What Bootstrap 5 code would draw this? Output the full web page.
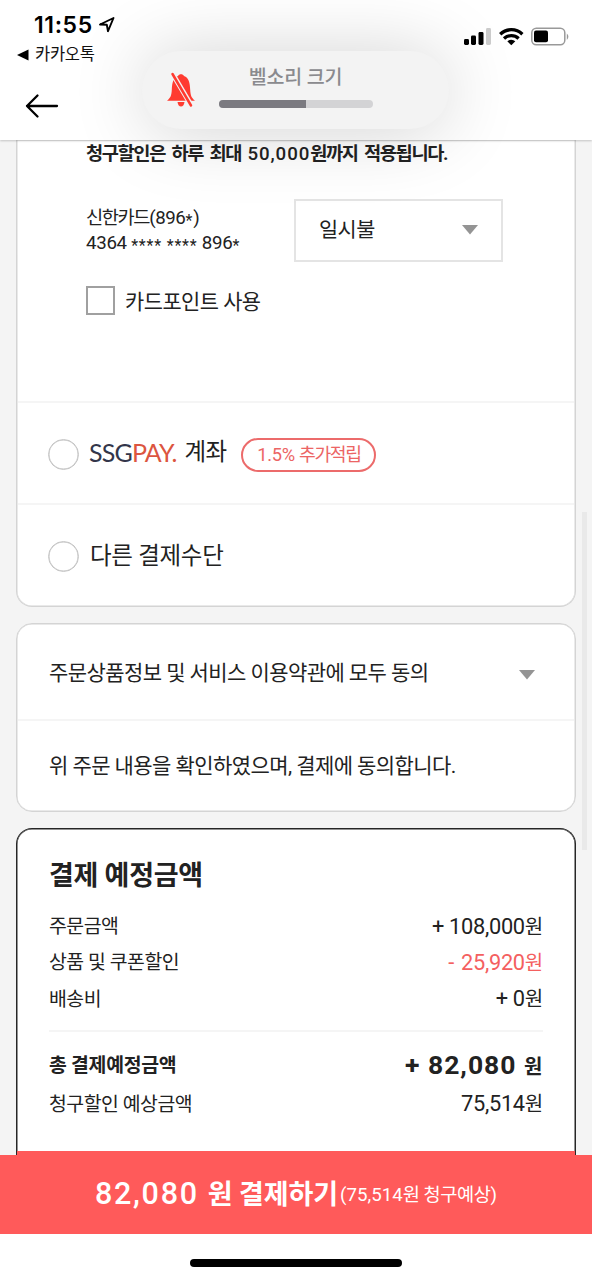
<!DOCTYPE html>
<html lang="ko">
<head>
<meta charset="utf-8">
<meta name="viewport" content="width=device-width, initial-scale=1">
<title>결제하기</title>
<link href="https://cdn.jsdelivr.net/npm/bootstrap@5.3.0/dist/css/bootstrap.min.css" rel="stylesheet">
<style>
  html, body { height: 1280px; overflow: hidden; }
  body { font-family: Roboto, "Noto Sans CJK KR", sans-serif; line-height: 1; color: #222; background: #f4f4f4; white-space: nowrap; font-size: 20px; }
  .ko { letter-spacing: -.025em; }
  .snug { letter-spacing: -.075em; }
  .appbar { height: 140px; box-shadow: 0 1px 2px rgba(0,0,0,.2); z-index: 2; }
  .clock { font: 600 23px/1 Inter, sans-serif; letter-spacing: .6px; color: #000; }
  .back-app { font-size: 16.5px; letter-spacing: -.3px; color: #111; }
  .hud { left: 142px; top: 51px; width: 307px; height: 78px; border-radius: 39px; background: #f3f3f3; box-shadow: 0 2px 75px rgba(0,0,0,.18); z-index: 3; }
  .hud-title { font-size: 19.5px; font-weight: 500; color: #8a8a8e; letter-spacing: -.2px; }
  .hud-track { width: 154px; height: 8px; background: #d3d3d5; border-radius: 4px; }
  .hud-track .progress-bar { background: #7b7a80; }
  .sheet { margin: 0 16px; padding: 1px; background: #fff; border: 1px solid #d4d4d4; box-shadow: inset 0 0 0 .5px #d4d4d4; border-radius: 16px; }
  .pay { height: 467px; border-top: 0; padding-top: 0; border-radius: 0 0 16px 16px; }
  .rule { border-top: 2px solid #f5f5f5; }
  .notice { font-size: 18.7px; font-weight: 700; word-spacing: 1.8px; }
  .cardno { font-size: 18.7px; line-height: 26px; }
  .mask { font-size: 16px; line-height: 1; letter-spacing: .8px; position: relative; top: 2px; }
  .picker { width: 209px; height: 63px; border: 2px solid #e4e4e4; }
  .tick { width: 29px; height: 29px; border: 2px solid #a0a0a0; }
  .dot { width: 31px; height: 31px; border: 1px solid #c4c4c4; box-shadow: inset 0 0 0 .5px #c4c4c4; border-radius: 50%; }
  .brand { font: 400 25px/1 Lato, sans-serif; letter-spacing: -.8px; color: #33364a; }
  .brand b { font-weight: 400; color: #dc5540; letter-spacing: -1px; }
  .chip { width: 135px; height: 34px; border: 2px solid #ec6b6b; border-radius: 17px; color: #ec6565; font-size: 18.3px; }
  .terms { height: 189px; margin-top: 16px; }
  .bill { height: 327px; margin-top: 16px; border-color: #262626; box-shadow: inset 0 0 0 .5px #262626; border-bottom: 0; padding-bottom: 0; border-radius: 16px 16px 0 0; }
  .bill h2 { font-size: 27px; font-weight: 700; line-height: 1; letter-spacing: -.01em; }
  .line { height: 36.3px; font-size: 19.4px; padding-right: 1px; }
  .amt { font-size: 21.8px; letter-spacing: -.3px; }
  .amt .ko { font-size: 20px; letter-spacing: -.06em; }
  .minus { color: #f4605f; }
  .cta { height: 79px; background: #ff5a5a; color: #fff; }
  .lip { height: 4px; margin: 0 -1px; background: #ff5a5a; }
  .home { width: 212px; height: 8px; border-radius: 4px; background: #000; }
  .scroll { left: 582px; top: 512px; width: 5px; height: 338px; background: #e9e9e9; }
</style>
</head>
<body class="d-flex flex-column position-relative">
<header class="appbar bg-white position-relative flex-shrink-0">
  <div class="d-flex justify-content-between">
    <div style="padding:14px 0 0 17px">
      <div class="d-flex align-items-center" style="padding-left:17px;height:23px">
        <span class="clock">11:55</span>
        <svg width="18" height="18" viewBox="0 0 18 18" style="margin:-3px 0 0 5px"><path d="M2 9.500 15.500 3 10 16.200 8.800 9.800Z" fill="none" stroke="#000" stroke-width="1.900" stroke-linejoin="round"/></svg>
      </div>
      <div class="d-flex align-items-center" style="margin-top:10px">
        <svg width="12" height="12" viewBox="0 0 12 12"><path d="M0 6 11.500.5v11Z"/></svg>
        <span class="back-app" style="margin-left:6px">카카오톡</span>
      </div>
    </div>
    <div class="d-flex" style="padding:26px 22px 0 0">
      <svg width="108" height="22" viewBox="0 0 108 22">
        <g><rect x="2" y="13" width="5" height="6" rx="1.400"/><rect x="9" y="9.500" width="5" height="9.500" rx="1.400"/><rect x="16.500" y="6" width="5" height="13" rx="1.400"/><rect x="24" y="2" width="5" height="17" rx="1.400" fill="#ccc"/></g>
        <g fill="none" stroke="#000" stroke-width="3.300"><path d="M38.200 8.200a16 16 0 0 1 22.200 0"/><path d="M42 12.500a10.700 10.700 0 0 1 14.600 0"/></g>
        <path d="M45.300 15.300a6 6 0 0 1 8 0L49.300 19.200Z"/>
        <rect x="69.800" y="2.200" width="33" height="16.600" rx="4.500" fill="none" stroke="#999" stroke-width="1.500"/>
        <rect x="72" y="4.600" width="14" height="11.600" rx="2"/>
        <path d="M104.800 7.500q3.200 3 0 6.500Z" fill="#999"/>
      </svg>
    </div>
  </div>
  <svg class="position-absolute" style="left:25px;top:93px" width="34" height="26" viewBox="0 0 34 26"><path d="M12.500 2.500 2 13l10.500 10.500M2 13h30" fill="none" stroke="#000" stroke-width="2.300" stroke-linecap="round" stroke-linejoin="round"/></svg>
</header>
<div class="hud position-absolute">
  <svg class="position-absolute" style="left:24px;top:20px" width="32" height="38" viewBox="0 0 32 38">
    <path d="M1 29.700c3.500-3 4.500-5 4.800-11 .3-7 1.500-12 6.200-13.700 1-2.300 5-2.300 6 0 4.700 1.700 5.900 6.700 6.200 13.700.3 6 1.300 8 4.800 11Z" fill="#ff3b30"/>
    <path d="M11.500 31h7q-.8 4.500-3.500 4.500T11.500 31Z" fill="#ff3b30"/>
    <path d="M5.500 1 26.500 36.500" stroke="#f3f3f3" stroke-width="5"/>
    <path d="M6.500 3 25 34.500" stroke="#ff3b30" stroke-width="2.500" stroke-linecap="round"/>
  </svg>
  <div class="d-flex flex-column align-items-center" style="padding-top:17px">
    <span class="hud-title">벨소리 크기</span>
    <div class="progress hud-track" style="margin-top:12px"><div class="progress-bar" style="width:56.5%"></div></div>
  </div>
</div>

<main class="flex-grow-1">
  <section class="sheet pay">
    <div style="height:261px;padding:5px 0 0 68px">
      <div class="notice"><span class="snug">청구할인은</span> <span class="snug">하루</span> <span class="snug">최대</span> <span style="letter-spacing:.9px;font-weight:500">50,000</span><span class="snug">원까지</span> <span class="snug">적용됩니다.</span></div>
      <div class="d-flex" style="margin-top:35px">
        <div class="cardno" style="width:208px;padding-top:6px"><div><span class="snug">신한카드</span><span style="letter-spacing:-.4px">(896<span class="mask">*</span>)</span></div><div style="letter-spacing:-.3px;margin-top:-1px">4364 <span class="mask">**** ****</span> 896<span class="mask">*</span></div></div>
        <div class="picker d-flex align-items-center justify-content-between" style="padding:1px 23px 0">
          <span class="ko" style="font-size:20.800px">일시불</span>
          <svg width="16" height="10" viewBox="0 0 16 10" style="margin-top:-2px"><path d="M0 0h16L8 9.500Z" fill="#949494"/></svg>
        </div>
      </div>
      <div class="d-flex align-items-center" style="margin-top:24px"><span class="tick"></span><span class="ko" style="margin:4px 0 0 10px;font-size:20.900px">카드포인트 사용</span></div>
    </div>
    <div class="rule d-flex align-items-center" style="height:102px;padding:3px 0 0 30px">
      <span class="dot"></span>
      <span class="brand" style="margin:-4px 0 0 10px">SSG<b>PAY.</b></span>
      <span class="ko" style="margin:-4px 0 0 8px;font-size:23.500px">계좌</span>
      <span class="chip d-flex align-items-center justify-content-center" style="margin:0 0 0 15px"><span style="letter-spacing:-.3px;padding-top:2px">1.5% <span class="snug">추가적립</span></span></span>
    </div>
    <div class="rule d-flex align-items-center" style="height:102px;padding:3px 0 0 30px">
      <span class="dot"></span><span style="margin:1px 0 0 11px;font-size:23.500px;letter-spacing:-.3px">다른 결제수단</span>
    </div>
  </section>

  <section class="sheet terms">
    <div class="d-flex align-items-center justify-content-between" style="height:94px;padding:2px 39px 0 31px">
      <span style="font-size:21px;letter-spacing:-.567px">주문상품정보 및 서비스 이용약관에 모두 동의</span>
      <svg width="16" height="10" viewBox="0 0 16 10" style="margin-top:4px"><path d="M0 0h16L8 9.500Z" fill="#949494"/></svg>
    </div>
    <div class="rule d-flex align-items-center" style="height:91px;padding:2px 0 0 31px"><span style="font-size:21px;letter-spacing:-.567px">위 주문 내용을 확인하였으며, 결제에 동의합니다.</span></div>
  </section>

  <section class="sheet bill d-flex flex-column">
    <div style="padding:33px 31px 0">
      <h2 class="mb-0">결제 예정금액</h2>
      <div style="margin-top:18.500px">
        <div class="line d-flex justify-content-between align-items-center"><span class="ko">주문금액</span><span class="amt">+ 108,000<span class="ko">원</span></span></div>
        <div class="line d-flex justify-content-between align-items-center"><span class="ko">상품 및 쿠폰할인</span><span class="amt minus" style="word-spacing:2px">- 25,920<span class="ko">원</span></span></div>
        <div class="line d-flex justify-content-between align-items-center"><span class="ko">배송비</span><span class="amt">+ 0<span class="ko">원</span></span></div>
      </div>
      <div class="rule" style="margin-top:12.500px;padding-top:13px">
        <div class="line fw-bold d-flex justify-content-between align-items-center" style="height:40px"><span style="letter-spacing:-.3px;padding-top:1px">총 결제예정금액</span><span style="font-size:26.500px;letter-spacing:1px">+ 82,080 <span class="ko" style="font-size:20px">원</span></span></div>
        <div class="line d-flex justify-content-between align-items-center" style="height:39px"><span class="ko">청구할인 예상금액</span><span class="amt">75,514<span class="ko">원</span></span></div>
      </div>
    </div>
    <div class="lip mt-auto"></div>
  </section>
</main>

<div class="cta flex-shrink-0 d-flex align-items-center justify-content-center">
  <span style="font-size:30.500px;font-weight:500;letter-spacing:1.700px">82,080</span>
  <span class="fw-bold" style="font-size:27px;margin:2px 2px 0 9px;letter-spacing:-.1px">원 결제하기</span>
  <span style="font-size:18.700px;padding-top:2px">(75,514<span class="ko">원 청구예상</span>)</span>
</div>
<footer class="bg-white flex-shrink-0 d-flex justify-content-center" style="height:46px;padding-top:25px"><div class="home"></div></footer>
<div class="scroll position-absolute"></div>
<script src="https://cdn.jsdelivr.net/npm/bootstrap@5.3.0/dist/js/bootstrap.bundle.min.js"></script>
</body>
</html>
